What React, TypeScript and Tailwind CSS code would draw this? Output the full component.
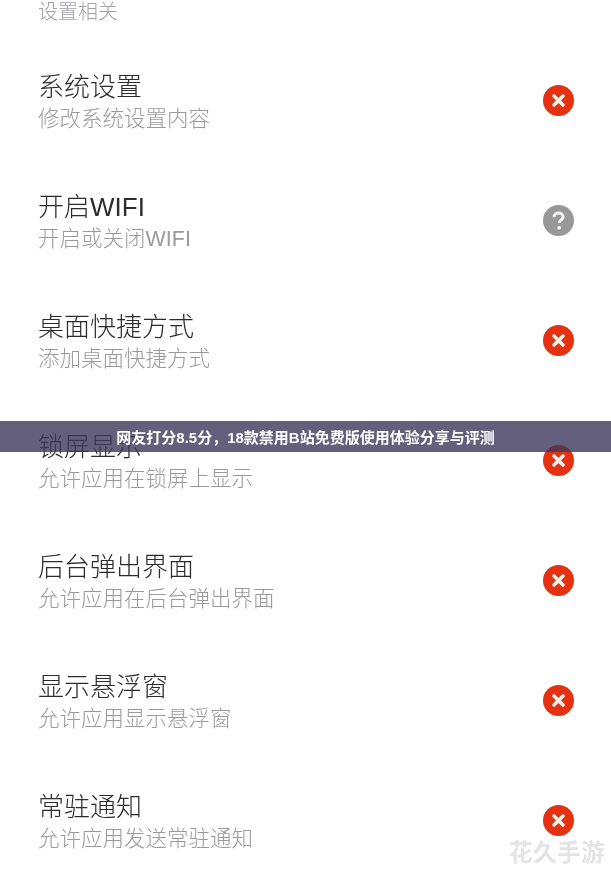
const rows = [
  { title: "系统设置", sub: "修改系统设置内容", kind: "x" },
  { title: "开启WIFI", sub: "开启或关闭WIFI", kind: "q" },
  { title: "桌面快捷方式", sub: "添加桌面快捷方式", kind: "x" },
  { title: "锁屏显示", sub: "允许应用在锁屏上显示", kind: "x" },
  { title: "后台弹出界面", sub: "允许应用在后台弹出界面", kind: "x" },
  { title: "显示悬浮窗", sub: "允许应用显示悬浮窗", kind: "x" },
  { title: "常驻通知", sub: "允许应用发送常驻通知", kind: "x" },
];

const font = { fontFamily: '"Liberation Sans", "Noto Sans CJK SC", sans-serif' };

function Status({ kind }: { kind: string }) {
  if (kind === "q") {
    return (
      <svg width="31" height="31" viewBox="0 0 31 31" className="shrink-0">
        <circle cx="15.5" cy="15.5" r="15.5" fill="#989898" />
        <path d="M11 12.2c0-2.6 2-4.2 4.6-4.2s4.500 1.500 4.500 3.800c0 3-3.800 3.200-3.800 6.200" fill="none" stroke="#f4f4f4" strokeWidth="3" />
        <circle cx="16.200" cy="22.800" r="1.900" fill="#f4f4f4" />
      </svg>
    );
  }
  return (
    <svg width="31" height="31" viewBox="0 0 31 31" className="shrink-0">
      <circle cx="15.5" cy="15.5" r="15.5" fill="#e5310f" />
      <path d="M11 11l9 9M20 11l-9 9" fill="none" stroke="#fbeee6" strokeWidth="3.600" strokeLinecap="round" />
    </svg>
  );
}

export default function App() {
  return (
    <div className="relative h-[874px] w-[611px] overflow-hidden bg-white blur-[0.4px]" style={font}>
      <div className="flex h-[40px] items-start pl-[38px] text-[20px] font-light leading-[24px] text-[#a0a0a6]">
        设置相关
      </div>
      {rows.map((r) => (
        <div key={r.title} className="flex h-[120px] items-center justify-between pl-[38px] pr-[37px]">
          <div className="flex flex-col pt-[4px]">
            <div className="text-[26px] font-light leading-[32px] text-[#2c2c2c]">{r.title}</div>
            <div className="mt-[1px] text-[21.500px] font-light leading-[30px] text-[#9a9a9a]">{r.sub}</div>
          </div>
          <Status kind={r.kind} />
        </div>
      ))}
      <div className="absolute left-0 top-[421px] flex h-[31px] w-full items-center justify-center bg-[#3d3759]/80 pt-[3px] text-[15px] font-bold text-white">
        网友打分8.5分，18款禁用B站免费版使用体验分享与评测
      </div>
      <div className="absolute bottom-[7px] right-[6px] pt-[2px] text-[23.500px] font-bold leading-[28px] tracking-[0.5px] text-[#e4e4e6]">
        花久手游
      </div>
    </div>
  );
}
